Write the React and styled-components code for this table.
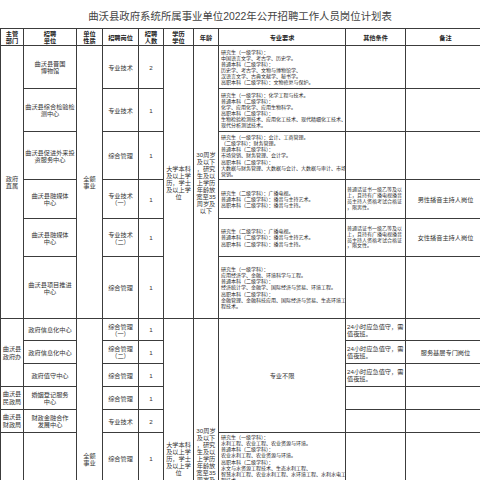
import React from 'react'
import styled, { createGlobalStyle } from 'styled-components'

const GlobalStyle = createGlobalStyle`
  html, body {
    margin: 0;
    padding: 0;
    background: #fff;
    overflow: hidden;
  }
  body {
    font-family: "Liberation Sans", "Noto Sans CJK SC", sans-serif;
    color: #333;
  }
`

const colWidths = [23, 53, 26, 36, 25, 30, 25, 127, 60, 80]

// 每格里手动换行，跟原表一致
const br = (lines) =>
  lines.map((l, i) => (
    <React.Fragment key={i}>
      {l}
      {i < lines.length - 1 && <br />}
    </React.Fragment>
  ))

const eduText = br(['大学本科', '及以上学', '历，学士', '及以上学', '位'])
const ageText = br(['30周岁', '及以下', '，研究', '生及以', '上学历', '年龄放', '宽至35', '周岁及', '以下'])
const dutyText = br(['24小时应急值守，需', '值夜班。'])

const specs = {
  museum: [
    '研究生（一级学科）：',
    '中国语言文学、考古学、历史学。',
    '普通本科（二级学科）：',
    '历史学、考古学、文物与博物馆学、',
    '汉语言文学、古典文献学、秘书学。',
    '高职本科（二级学科）：文物修复与保护。',
  ],
  lab: [
    '研究生（一级学科）：化学工程与技术。',
    '普通本科（二级学科）：',
    '化学、应用化学、应用生物科学。',
    '高职本科（二级学科）：',
    '生物检验检测技术、应用化工技术、现代精细化工技术、',
    '现代分析测试技术。',
  ],
  invest: [
    '研究生（一级学科）：会计、工商管理。',
    '（二级学科）：财务管理。',
    '普通本科（二级学科）：',
    '市场营销、财务管理、会计学。',
    '高职本科（二级学科）：',
    '大数据与财务管理、大数据与会计、大数据与审计、市场',
    '营销。',
  ],
  media: [
    '研究生（二级学科）：广播电视。',
    '普通本科（二级学科）：播音与主持艺术。',
    '高职本科（二级学科）：播音与主持。',
  ],
  project: [
    '研究生（一级学科）：',
    '应用经济学、金融、环境科学与工程。',
    '普通本科（二级学科）：',
    '经济统计学、金融学、国际经济与贸易、环境工程。',
    '高职本科（二级学科）：',
    '金融管理、金融科技应用、国际经济与贸易、生态环境工',
    '程技术。',
  ],
  water: [
    '研究生（一级学科）：',
    '水利工程、农业工程、农业资源与环境。',
    '普通本科（二级学科）：',
    '农业水利工程、农业资源与环境。',
    '高职本科（二级学科）：',
    '水文与水资源工程技术、生态水利工程、',
    '智慧水利工程、农业水利工程、水环境工程、水利水电工',
    '程技术。',
  ],
}

export default function App() {
  return (
    <Page>
      <GlobalStyle />
      <Title>曲沃县政府系统所属事业单位2022年公开招聘工作人员岗位计划表</Title>
      <Sheet>
        <colgroup>
          {colWidths.map((w, i) => (
            <col key={i} style={{ width: w }} />
          ))}
        </colgroup>
        <tbody>
          <Row $h={17}>
            <Th>{br(['主管', '部门'])}</Th>
            <Th>{br(['招聘', '单位'])}</Th>
            <Th>{br(['单位', '性质'])}</Th>
            <Th>招聘岗位</Th>
            <Th>{br(['招聘', '人数'])}</Th>
            <Th>{br(['学历', '学位'])}</Th>
            <Th>年龄</Th>
            <Th>专业要求</Th>
            <Th>其他条件</Th>
            <Th>备注</Th>
          </Row>

          <Row $h={43}>
            <Cell rowSpan={6}>{br(['政府', '直属'])}</Cell>
            <Cell>{br(['曲沃县晋国', '博物馆'])}</Cell>
            <Cell rowSpan={6}>{br(['全额', '事业'])}</Cell>
            <Cell>专业技术</Cell>
            <Cell>2</Cell>
            <Cell rowSpan={6}>{eduText}</Cell>
            <Cell rowSpan={6}>{ageText}</Cell>
            <Spec>{br(specs.museum)}</Spec>
            <Note />
            <Cell />
          </Row>

          <Row $h={43}>
            <Cell>{br(['曲沃县综合检验检', '测中心'])}</Cell>
            <Cell>专业技术</Cell>
            <Cell>1</Cell>
            <Spec>{br(specs.lab)}</Spec>
            <Note />
            <Cell />
          </Row>

          <Row $h={48}>
            <Cell>{br(['曲沃县促进外来投', '资服务中心'])}</Cell>
            <Cell>综合管理</Cell>
            <Cell>1</Cell>
            <Spec>{br(specs.invest)}</Spec>
            <Note />
            <Cell />
          </Row>

          <Row $h={39}>
            <Cell>{br(['曲沃县融媒体', '中心'])}</Cell>
            <Cell>{br(['专业技术', '（一）'])}</Cell>
            <Cell>1</Cell>
            <Spec>{br(specs.media)}</Spec>
            <Note $small>{br(['普通话证书一级乙等及以', '上，且持有广播电视播音', '员主持人资格考试合格证', '，限男性。'])}</Note>
            <Cell>男性播音主持人岗位</Cell>
          </Row>

          <Row $h={38}>
            <Cell>{br(['曲沃县融媒体', '中心'])}</Cell>
            <Cell>{br(['专业技术', '（二）'])}</Cell>
            <Cell>1</Cell>
            <Spec>{br(specs.media)}</Spec>
            <Note $small>{br(['普通话证书一级乙等及以', '上，且持有广播电视播音', '员主持人资格考试合格证', '，限女性。'])}</Note>
            <Cell>女性播音主持人岗位</Cell>
          </Row>

          <Row $h={62}>
            <Cell>{br(['曲沃县项目推进', '中心'])}</Cell>
            <Cell>综合管理</Cell>
            <Cell>1</Cell>
            <Spec>{br(specs.project)}</Spec>
            <Note />
            <Cell />
          </Row>

          <Row $h={22}>
            <Cell rowSpan={3} $lh={8}>{br(['曲沃县', '政府办'])}</Cell>
            <Cell>政府信息化中心</Cell>
            <Cell rowSpan={7}>{br(['全额', '事业'])}</Cell>
            <Cell>{br(['综合管理', '（一）'])}</Cell>
            <Cell>1</Cell>
            <Cell rowSpan={7}>{eduText}</Cell>
            <Cell rowSpan={7}>{ageText}</Cell>
            <Cell rowSpan={5}>专业不限</Cell>
            <Note>{dutyText}</Note>
            <Cell />
          </Row>

          <Row $h={23}>
            <Cell>政府信息化中心</Cell>
            <Cell>{br(['综合管理', '（二）'])}</Cell>
            <Cell>1</Cell>
            <Note>{dutyText}</Note>
            <Cell>服务基层专门岗位</Cell>
          </Row>

          <Row $h={23}>
            <Cell>政府值守中心</Cell>
            <Cell>综合管理</Cell>
            <Cell>1</Cell>
            <Note>{dutyText}</Note>
            <Cell />
          </Row>

          <Row $h={23}>
            <Cell $lh={8}>{br(['曲沃县', '民政局'])}</Cell>
            <Cell>{br(['婚姻登记服务', '中心'])}</Cell>
            <Cell>综合管理</Cell>
            <Cell>1</Cell>
            <Note />
            <Cell />
          </Row>

          <Row $h={23}>
            <Cell $lh={8}>{br(['曲沃县', '财政局'])}</Cell>
            <Cell>{br(['财政金融合作', '发展中心'])}</Cell>
            <Cell>专业技术</Cell>
            <Cell>2</Cell>
            <Note />
            <Cell />
          </Row>

          <Row $h={52}>
            <Cell />
            <Cell />
            <Cell>综合管理</Cell>
            <Cell>1</Cell>
            <Spec>{br(specs.water)}</Spec>
            <Note />
            <Cell />
          </Row>

          <Row $h={114}>
            <Cell />
            <Cell />
            <Cell />
            <Cell />
            <Spec />
            <Note />
            <Cell />
          </Row>
        </tbody>
      </Sheet>
    </Page>
  )
}

const Page = styled.div`
  width: 480px;
  height: 480px;
  overflow: hidden;
`

const Title = styled.div`
  height: 28px;
  display: flex;
  align-items: center;
  justify-content: center;
  padding-top: 2px;
  box-sizing: border-box;
  font-size: 10.4px;
  color: #444;
  white-space: nowrap;
`

const Sheet = styled.table`
  border-collapse: collapse;
  table-layout: fixed;
  width: 485px;
  margin: 0;
`

const Row = styled.tr`
  height: ${(p) => p.$h}px;
`

const Cell = styled.td`
  border: 1px solid #3c3c3c;
  padding: 0 1px;
  text-align: center;
  vertical-align: middle;
  font-size: 6.2px;
  line-height: ${(p) => p.$lh || 7}px;
  color: #333;
  white-space: nowrap;
  overflow: hidden;
`

const Th = styled(Cell).attrs({ as: 'th' })`
  font-weight: 700;
  color: #222;
`

const Spec = styled(Cell)`
  text-align: left;
  padding: 0 1px 0 2px;
  font-size: 5px;
  line-height: 6.1px;
  color: #262626;
`

const Note = styled(Cell)`
  text-align: left;
  padding: 0 1px;
  font-size: ${(p) => (p.$small ? '5px' : '6.2px')};
  line-height: ${(p) => (p.$small ? '5.8px' : '7px')};
`
